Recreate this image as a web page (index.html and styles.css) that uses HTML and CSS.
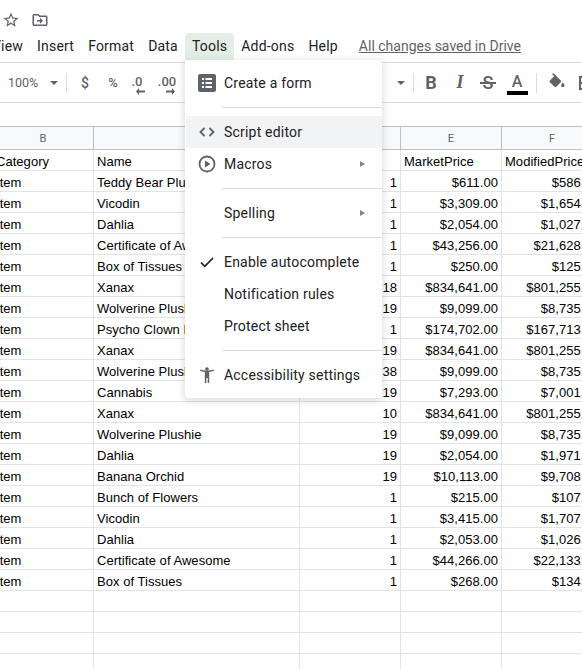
FILE: index.html
```html
<!DOCTYPE html>
<html lang="en">
<head>
  <meta charset="UTF-8">
  <title>Sheet - Tools menu</title>
  <link rel="stylesheet" href="styles.css">
</head>
<body>

<div class="App">
  <div class="TitleRow">
    <svg class="TitleIcon" width="18" height="18" viewBox="0 0 24 24"><path fill="#5f6368" d="M22 9.24l-7.19-.62L12 2 9.19 8.63 2 9.24l5.46 4.73L5.82 21 12 17.27 18.18 21l-1.63-7.03L22 9.24zM12 15.4l-3.76 2.27 1-4.28-3.32-2.88 4.38-.38L12 6.1l1.71 4.04 4.38.38-3.32 2.88 1 4.28L12 15.4z"/></svg>
    <svg class="TitleIcon" width="18" height="18" viewBox="0 0 24 24"><path fill="#5f6368" d="M20 6h-8l-2-2H4c-1.1 0-2 .9-2 2v12c0 1.1.9 2 2 2h16c1.1 0 2-.9 2-2V8c0-1.1-.9-2-2-2zm0 12H4V6h5.17l2 2H20v10zm-8-1l4-4-4-4v3H8v2h4v3z"/></svg>
  </div>

  <div class="MenuBar">
    <span class="MenuItem">View</span>
    <span class="MenuItem">Insert</span>
    <span class="MenuItem">Format</span>
    <span class="MenuItem">Data</span>
    <span class="MenuItem MenuItemOpen">Tools</span>
    <span class="MenuItem">Add-ons</span>
    <span class="MenuItem">Help</span>
    <a class="SavedLink">All changes saved in Drive</a>
  </div>

  <div class="ToolBar">
    <span class="Zoom">100%</span>
    <span class="Caret"></span>
    <span class="ToolSep"></span>
    <span class="Tool ToolDollar">$</span>
    <span class="Tool ToolPercent">%</span>
    <span class="Tool ToolDec">.0
      <svg width="9" height="7" viewBox="0 0 9 7"><path fill="#5f6368" d="M3 0v2.500h6v2H3V7L0 3.500z"/></svg>
    </span>
    <span class="Tool ToolDec ToolDecMore">.00
      <svg width="9" height="7" viewBox="0 0 9 7"><path fill="#5f6368" d="M6 0v2.500H0v2h6V7l3-3.500z"/></svg>
    </span>
    <span class="ToolGap"></span>
    <span class="Caret"></span>
    <span class="ToolSep ToolSepRight"></span>
    <span class="Tool ToolBold">B</span>
    <span class="Tool ToolItalic">I</span>
    <span class="Tool ToolStrike">S</span>
    <span class="Tool ToolColor">A<i class="ColorBar"></i></span>
    <span class="ToolSep ToolSepColor"></span>
    <svg class="ToolFill" width="20" height="20" viewBox="0 0 24 24"><path fill="#5f6368" d="M16.560 8.940L7.620 0 6.210 1.410l2.380 2.380-5.150 5.150c-.59.59-.59 1.540 0 2.120l5.500 5.500c.29.290.68.440 1.060.440s.77-.150 1.060-.440l5.500-5.500c.590-.580.590-1.530 0-2.120zM19 11.500s-2 2.170-2 3.500c0 1.100.9 2 2 2s2-.9 2-2c0-1.330-2-3.500-2-3.500z"/></svg>
    <svg class="ToolBorders" width="14" height="14" viewBox="0 0 14 14"><path fill="#5f6368" d="M0 0h14v14H0V0zm2 2v4h4V2H2zm6 0v4h4V2H8zM2 8v4h4V8H2zm6 0v4h4V8H8z"/></svg>
  </div>

  <div class="FormulaBar"></div>

  <table class="Sheet">
    <colgroup>
      <col class="ColB"><col class="ColC"><col class="ColD"><col class="ColE"><col class="ColF">
    </colgroup>
    <tr class="HeadRow"><th>B</th><th>C</th><th>D</th><th>E</th><th>F</th></tr>
    <tr><td>Category</td><td>Name</td><td class="Num"></td><td>MarketPrice</td><td>ModifiedPrice</td></tr>
    <tr><td>Item</td><td>Teddy Bear Plushie</td><td class="Num">1</td><td class="Num">$611.00</td><td class="Num">$586.56</td></tr>
    <tr><td>Item</td><td>Vicodin</td><td class="Num">1</td><td class="Num">$3,309.00</td><td class="Num">$1,654.50</td></tr>
    <tr><td>Item</td><td>Dahlia</td><td class="Num">1</td><td class="Num">$2,054.00</td><td class="Num">$1,027.00</td></tr>
    <tr><td>Item</td><td>Certificate of Awesome</td><td class="Num">1</td><td class="Num">$43,256.00</td><td class="Num">$21,628.00</td></tr>
    <tr><td>Item</td><td>Box of Tissues</td><td class="Num">1</td><td class="Num">$250.00</td><td class="Num">$125.00</td></tr>
    <tr><td>Item</td><td>Xanax</td><td class="Num">18</td><td class="Num">$834,641.00</td><td class="Num">$801,255.36</td></tr>
    <tr><td>Item</td><td>Wolverine Plushie</td><td class="Num">19</td><td class="Num">$9,099.00</td><td class="Num">$8,735.04</td></tr>
    <tr><td>Item</td><td>Psycho Clown Plushie</td><td class="Num">1</td><td class="Num">$174,702.00</td><td class="Num">$167,713.92</td></tr>
    <tr><td>Item</td><td>Xanax</td><td class="Num">19</td><td class="Num">$834,641.00</td><td class="Num">$801,255.36</td></tr>
    <tr><td>Item</td><td>Wolverine Plushie</td><td class="Num">38</td><td class="Num">$9,099.00</td><td class="Num">$8,735.04</td></tr>
    <tr><td>Item</td><td>Cannabis</td><td class="Num">19</td><td class="Num">$7,293.00</td><td class="Num">$7,001.28</td></tr>
    <tr><td>Item</td><td>Xanax</td><td class="Num">10</td><td class="Num">$834,641.00</td><td class="Num">$801,255.36</td></tr>
    <tr><td>Item</td><td>Wolverine Plushie</td><td class="Num">19</td><td class="Num">$9,099.00</td><td class="Num">$8,735.04</td></tr>
    <tr><td>Item</td><td>Dahlia</td><td class="Num">19</td><td class="Num">$2,054.00</td><td class="Num">$1,971.84</td></tr>
    <tr><td>Item</td><td>Banana Orchid</td><td class="Num">19</td><td class="Num">$10,113.00</td><td class="Num">$9,708.48</td></tr>
    <tr><td>Item</td><td>Bunch of Flowers</td><td class="Num">1</td><td class="Num">$215.00</td><td class="Num">$107.50</td></tr>
    <tr><td>Item</td><td>Vicodin</td><td class="Num">1</td><td class="Num">$3,415.00</td><td class="Num">$1,707.50</td></tr>
    <tr><td>Item</td><td>Dahlia</td><td class="Num">1</td><td class="Num">$2,053.00</td><td class="Num">$1,026.50</td></tr>
    <tr><td>Item</td><td>Certificate of Awesome</td><td class="Num">1</td><td class="Num">$44,266.00</td><td class="Num">$22,133.00</td></tr>
    <tr><td>Item</td><td>Box of Tissues</td><td class="Num">1</td><td class="Num">$268.00</td><td class="Num">$134.00</td></tr>
    <tr><td></td><td></td><td></td><td></td><td></td></tr>
    <tr><td></td><td></td><td></td><td></td><td></td></tr>
    <tr><td></td><td></td><td></td><td></td><td></td></tr>
    <tr><td></td><td></td><td></td><td></td><td></td></tr>
  </table>

  <!-- Tools dropdown, sits over the sheet -->
  <div class="ToolsMenu">
    <div class="Entry">
      <svg class="EntryIcon" width="18" height="18" viewBox="0 0 18 18"><path fill="#5f6368" d="M2 0h14a2 2 0 0 1 2 2v14a2 2 0 0 1-2 2H2a2 2 0 0 1-2-2V2a2 2 0 0 1 2-2z"/><path fill="#fff" d="M4 4h2v2H4zM7.500 4H14v2H7.500zM4 8h2v2H4zM7.500 8H14v2H7.500zM4 12h2v2H4zM7.500 12H14v2H7.500z"/></svg>
      <span>Create a form</span>
    </div>
    <div class="EntrySep"></div>
    <div class="Entry EntryHover">
      <svg class="EntryIcon" width="16" height="10" viewBox="0 0 16 10"><path fill="none" stroke="#5f6368" stroke-width="1.800" d="M5.500 1L1.500 5l4 4M10.500 1l4 4-4 4"/></svg>
      <span>Script editor</span>
    </div>
    <div class="Entry">
      <svg class="EntryIcon" width="18" height="18" viewBox="0 0 18 18"><circle cx="9" cy="9" r="7.500" fill="none" stroke="#5f6368" stroke-width="1.800"/><path fill="#5f6368" d="M7 5.500L12.500 9 7 12.500z"/></svg>
      <span>Macros</span>
      <i class="SubArrow"></i>
    </div>
    <div class="EntrySep"></div>
    <div class="Entry">
      <span class="EntryIcon"></span>
      <span>Spelling</span>
      <i class="SubArrow"></i>
    </div>
    <div class="EntrySep"></div>
    <div class="Entry">
      <svg class="EntryIcon" width="14" height="11" viewBox="0 0 14 11"><path fill="none" stroke="#202124" stroke-width="1.700" d="M1 5.500l3.800 3.800L13 1"/></svg>
      <span>Enable autocomplete</span>
    </div>
    <div class="Entry">
      <span class="EntryIcon"></span>
      <span>Notification rules</span>
    </div>
    <div class="Entry">
      <span class="EntryIcon"></span>
      <span>Protect sheet</span>
    </div>
    <div class="EntrySep"></div>
    <div class="Entry">
      <svg class="EntryIcon" width="14" height="16" viewBox="0 0 14 16"><circle cx="7" cy="2" r="1.800" fill="#5f6368"/><path fill="#5f6368" d="M0 3.800l.4-1.300C2.500 3.200 4.700 3.600 7 3.600s4.500-.4 6.600-1.100l.4 1.300c-1.500.5-3.200.9-4.800 1.100V16H7.700v-5H6.300v5H4.800V4.900C3.200 4.700 1.500 4.300 0 3.800z"/></svg>
      <span>Accessibility settings</span>
    </div>
  </div>
</div>

</body>
</html>
```

FILE: styles.css
```css
body {
  margin: 0;
  background-color: #fff;
  font-family: Roboto, Arial, sans-serif;
  color: #202124;
}

.App {
  position: relative;
  width: 582px;
  height: 669px;
  overflow: hidden;
}

.TitleRow {
  display: flex;
  align-items: center;
  gap: 11px;
  height: 33px;
  padding: 7px 0 0 2px;
  box-sizing: border-box;
}

.MenuBar {
  display: flex;
  align-items: flex-start;
  height: 29px;
  margin-left: -15px;
  border-bottom: 1px solid #dadce0;
  font-size: 14px;
  letter-spacing: 0.2px;
  white-space: nowrap;
}

.MenuItem {
  height: 27px;
  padding: 0 7px;
  line-height: 27px;
}

.MenuItemOpen {
  background-color: #e3efe6;
  border-radius: 4px 4px 0 0;
}

.SavedLink {
  margin-left: 14px;
  line-height: 27px;
  letter-spacing: 0;
  color: #5f6368;
  text-decoration: underline;
}

.ToolBar {
  display: flex;
  align-items: center;
  height: 39px;
  border-bottom: 1px solid #dadce0;
  color: #5f6368;
  white-space: nowrap;
}

.Zoom {
  flex: none;
  margin-left: 8px;
  width: 42px;
  font-size: 12.5px;
}

.Caret {
  flex: none;
  width: 0;
  height: 0;
  border-left: 4px solid transparent;
  border-right: 4px solid transparent;
  border-top: 4px solid #5f6368;
}

.ToolSep {
  flex: none;
  width: 1px;
  height: 20px;
  margin-left: 8px;
  background-color: #dadce0;
}

.Tool {
  display: flex;
  flex: none;
  flex-direction: column;
  align-items: center;
  font-size: 13px;
  font-weight: 500;
}

.ToolDollar {
  width: 14px;
  margin-left: 11px;
  font-size: 14px;
}

.ToolPercent {
  width: 14px;
  margin-left: 14px;
  font-size: 13px;
}

.ToolDec {
  width: 18px;
  height: 22px;
  margin: 4px 0 0 8px;
  line-height: 16px;
  font-size: 13px;
}

.ToolDec svg {
  margin: -2px 0 0 7px;
}

.ToolDecMore {
  width: 20px;
  margin-left: 11px;
}

.ToolGap {
  flex: none;
  width: 220px;
}

.ToolSepRight {
  margin-right: 10px;
}

.ToolBold,
.ToolItalic,
.ToolStrike {
  position: relative;
  width: 14px;
  font-size: 18px;
}

.ToolBold {
  font-weight: 700;
}

.ToolItalic {
  margin-left: 15px;
  font-family: "Liberation Serif", serif;
  font-style: italic;
  font-weight: 700;
}

.ToolStrike {
  margin-left: 14px;
}

/* strike line is wider than the letter */
.ToolStrike::after {
  content: "";
  position: absolute;
  left: -1px;
  right: -1px;
  top: 10px;
  height: 2px;
  background-color: #5f6368;
}

.ToolColor {
  width: 22px;
  height: 25px;
  margin-left: 11px;
  font-size: 16px;
  line-height: 23px;
}

.ColorBar {
  display: block;
  width: 21px;
  height: 4px;
  margin-top: -2px;
  background-color: #000;
}

.ToolSepColor {
  margin-left: 8px;
}

.ToolFill {
  flex: none;
  margin-left: 10px;
}

.ToolBorders {
  flex: none;
  margin-left: 12px;
}

.FormulaBar {
  height: 23px;
}

.Sheet {
  table-layout: fixed;
  width: 610px;
  margin-left: -7px;
  border-collapse: separate;
  border-spacing: 0;
  font-family: "Liberation Sans", Arial, sans-serif;
  font-size: 13px;
  letter-spacing: 0.04px;
  color: #000;
}

.ColB { width: 101px; }
.ColC { width: 206px; }
.ColD { width: 101px; }
.ColE { width: 101px; }
.ColF { width: 101px; }

.Sheet th {
  height: 22px;
  padding: 0;
  background-color: #f8f9fa;
  border-top: 1px solid #c0c0c0;
  border-bottom: 1px solid #c0c0c0;
  border-right: 1px solid #c0c0c0;
  font-family: Roboto, Arial, sans-serif;
  font-size: 11px;
  font-weight: 400;
  color: #5f6368;
}

.Sheet td {
  height: 18px;
  padding: 2px 3px 0;
  border-bottom: 1px solid #e2e3e3;
  border-right: 1px solid #e2e3e3;
  white-space: nowrap;
  overflow: hidden;
}

.Sheet .Num {
  text-align: right;
}

.ToolsMenu {
  position: absolute;
  left: 185px;
  top: 60px;
  width: 197px;
  padding: 7px 0;
  background-color: #fff;
  border-radius: 0 4px 4px 4px;
  box-shadow: 0 2px 6px 2px rgba(60, 64, 67, 0.15);
  font-size: 14px;
  letter-spacing: 0.2px;
}

.Entry {
  display: flex;
  align-items: center;
  height: 32px;
  margin-left: 1px;
  white-space: nowrap;
}

.EntryHover {
  background-color: #f1f3f4;
}

.EntryIcon {
  flex: none;
  width: 18px;
  margin: 0 8px 0 12px;
}

.SubArrow {
  margin-left: auto;
  margin-right: 17px;
  width: 0;
  height: 0;
  border-top: 3px solid transparent;
  border-bottom: 3px solid transparent;
  border-left: 5px solid #80868b;
}

.EntrySep {
  height: 1px;
  margin: 8px 0 8px 37px;
  background-color: #dadce0;
}
```
